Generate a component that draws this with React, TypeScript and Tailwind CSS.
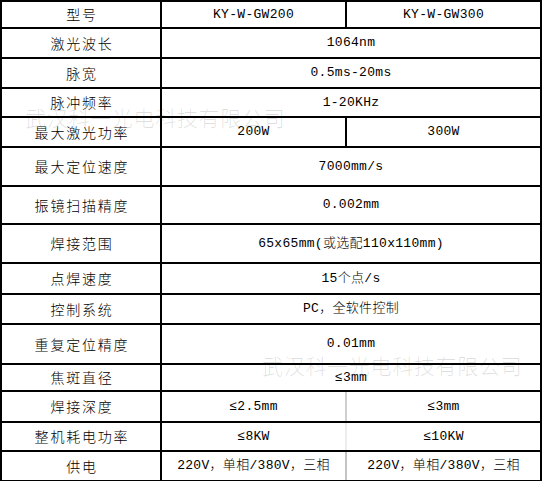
import React from 'react'

type Row = {
  label: string
  h: string
  cells: string[]
  split?: string
  last?: boolean
}

// 行高含底边框，按参考图的横线位置推算
const rows: Row[] = [
  { label: '型号', h: 'h-[27px]', cells: ['KY-W-GW200', 'KY-W-GW300'], split: 'border-r-black' },
  { label: '激光波长', h: 'h-[30px]', cells: ['1064nm'] },
  { label: '脉宽', h: 'h-[30px]', cells: ['0.5ms-20ms'] },
  { label: '脉冲频率', h: 'h-[29px]', cells: ['1-20KHz'] },
  { label: '最大激光功率', h: 'h-[30px]', cells: ['200W', '300W'], split: 'border-r-black' },
  { label: '最大定位速度', h: 'h-[39px]', cells: ['7000mm/s'] },
  { label: '振镜扫描精度', h: 'h-[38px]', cells: ['0.002mm'] },
  { label: '焊接范围', h: 'h-[39px]', cells: ['65x65mm(或选配110x110mm)'] },
  { label: '点焊速度', h: 'h-[31px]', cells: ['15个点/s'] },
  { label: '控制系统', h: 'h-[30px]', cells: ['PC，全软件控制'] },
  { label: '重复定位精度', h: 'h-[40px]', cells: ['0.01mm'] },
  { label: '焦斑直径', h: 'h-[27px]', cells: ['≤3mm'] },
  { label: '焊接深度', h: 'h-[31px]', cells: ['≤2.5mm', '≤3mm'], split: 'border-r-[#cfcfcf]' },
  { label: '整机耗电功率', h: 'h-[29px]', cells: ['≤8KW', '≤10KW'], split: 'border-r-[#ececec]' },
  { label: '供电', h: 'h-[29px]', cells: ['220V，单相/380V，三相', '220V，单相/380V，三相'], split: 'border-r-[#c4c4c4]', last: true },
]

const mono = "font-['Liberation_Mono','Noto_Sans_CJK_SC',monospace] font-light"

export default function App() {
  return (
    <div className="relative w-[549px] h-[493px] bg-white text-black overflow-hidden">
      <div className="w-[542px] border-t-2 border-l-2 border-black">
        {rows.map(r => (
          <div key={r.label} className={`flex ${r.h} ${r.last ? 'border-b border-black' : 'border-b-2 border-black'}`}>
            <div className="w-[160px] shrink-0 flex items-center justify-center border-r-2 border-black font-['Noto_Sans_CJK_SC',sans-serif] font-light text-[14px] tracking-[1.8px] pl-[2px]">
              {r.label}
            </div>
            {r.cells.length === 1 ? (
              <div className={`w-[380px] flex items-center justify-center border-r-2 border-black ${mono} text-[13px] tracking-[0.3px]`}>
                {r.cells[0]}
              </div>
            ) : (
              <>
                <div className={`w-[185px] flex items-center justify-center border-r-2 ${r.split} ${mono} text-[13px] tracking-[0.3px] whitespace-nowrap`}>
                  {r.cells[0]}
                </div>
                <div className={`w-[195px] flex items-center justify-center border-r-2 border-black ${mono} text-[13px] tracking-[0.3px] whitespace-nowrap`}>
                  {r.cells[1]}
                </div>
              </>
            )}
          </div>
        ))}
      </div>

      {/* 水印 */}
      <div className="absolute left-[25px] top-[102px] pointer-events-none whitespace-nowrap font-['Noto_Sans_CJK_SC',sans-serif] font-light text-[21px] tracking-[0.7px] text-[rgba(0,0,0,0.12)]">
        武汉科一光电科技有限公司
      </div>
      <div className="absolute left-[262px] top-[350px] pointer-events-none whitespace-nowrap font-['Noto_Sans_CJK_SC',sans-serif] font-light text-[21px] tracking-[0.7px] text-[rgba(0,0,0,0.12)]">
        武汉科一光电科技有限公司
      </div>
    </div>
  )
}
